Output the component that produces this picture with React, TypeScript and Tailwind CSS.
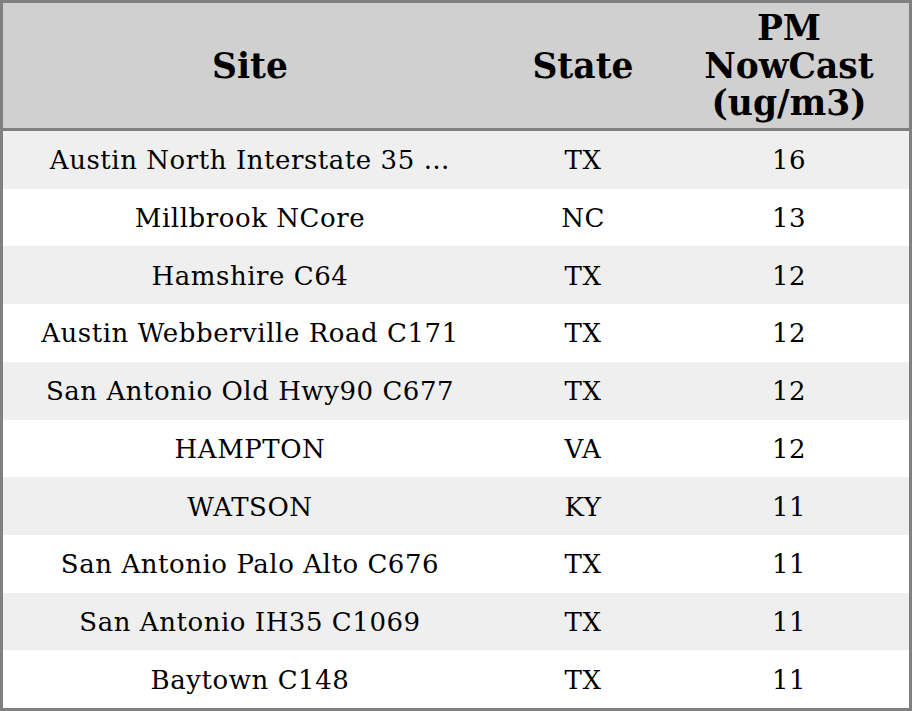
import React from "react";

const rows: [string, string, string][] = [
  ["Austin North Interstate 35 …", "TX", "16"],
  ["Millbrook NCore", "NC", "13"],
  ["Hamshire C64", "TX", "12"],
  ["Austin Webberville Road C171", "TX", "12"],
  ["San Antonio Old Hwy90 C677", "TX", "12"],
  ["HAMPTON", "VA", "12"],
  ["WATSON", "KY", "11"],
  ["San Antonio Palo Alto C676", "TX", "11"],
  ["San Antonio IH35 C1069", "TX", "11"],
  ["Baytown C148", "TX", "11"],
];

export default function App() {
  return (
    <div
      className="w-[912px] h-[711px] border-[3px] border-[#808080] flex flex-col text-black bg-white"
      style={{ fontFamily: '"DejaVu Serif", serif' }}
    >
      <div className="h-[123px] pt-[2px] shrink-0 bg-[#d0d0d0] border-b-[3px] border-[#808080] box-content flex items-center font-bold text-[34.5px] leading-[37.5px]">
        <div className="w-[494px] text-center">Site</div>
        <div className="w-[172px] text-center">State</div>
        <div className="w-[240px] text-center">
          PM
          <br />
          NowCast
          <br />
          (ug/m3)
        </div>
      </div>
      {rows.map((r, i) => (
        <div
          key={i}
          className={
            "flex-1 flex items-center pt-[2px] text-[26px] tracking-[0.55px] " +
            (i % 2 === 0 ? "bg-[#efefef]" : "bg-white")
          }
        >
          <div className="w-[494px] text-center whitespace-nowrap">{r[0]}</div>
          <div className="w-[172px] text-center">{r[1]}</div>
          <div className="w-[240px] text-center">{r[2]}</div>
        </div>
      ))}
    </div>
  );
}
